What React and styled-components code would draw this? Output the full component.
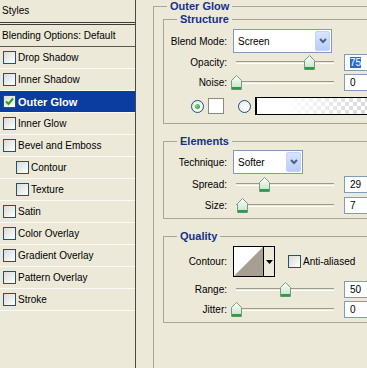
import React from "react";
import styled, { createGlobalStyle } from "styled-components";

const Global = createGlobalStyle`
  html, body { margin: 0; padding: 0; background: #ece9d8; }
  body { font-family: Tahoma, "Liberation Sans", "DejaVu Sans", sans-serif; font-size: 10px; color: #000; }
`;

const Window = styled.div`
  display: flex;
  width: 367px;
  height: 368px;
  overflow: hidden;
  background: #ece9d8;
`;

const Sidebar = styled.div`
  flex: none;
  width: 135px;
  border-right: 1px solid #4a4a44;
  display: flex;
  flex-direction: column;
`;

const Header = styled.div`
  height: 22px;
  line-height: 21px;
  padding-left: 2px;
  border-bottom: 3px double #3c3c38;
`;

const BlendRow = styled.div`
  height: 21px;
  line-height: 21px;
  padding-left: 2px;
  border-bottom: 1px solid #5a5a54;
`;

const StyleRow = styled.div`
  display: flex;
  align-items: center;
  gap: 2px;
  height: 21px;
  padding-left: ${(p) => (p.$indent ? 16 : 3)}px;
  border-bottom: 1px solid #fbfaf4;
  background: ${(p) => (p.$selected ? "#0b3c9f" : "transparent")};
  color: ${(p) => (p.$selected ? "#fff" : "#000")};
  font-weight: ${(p) => (p.$selected ? "bold" : "normal")};
  font-size: ${(p) => (p.$selected ? 11 : 10)}px;
`;

const Box = styled.span`
  flex: none;
  width: 11px;
  height: 11px;
  border: 1px solid #1c5180;
  background: linear-gradient(135deg, #dcdcd5 0%, #f4f4f0 70%, #fff 100%);
  display: inline-flex;
  align-items: center;
  justify-content: center;
`;

const Main = styled.div`
  flex: 1;
  min-width: 0;
  padding-left: 17px;
  overflow: hidden;
`;

const OuterGroup = styled.fieldset`
  margin: 0;
  width: 250px;
  min-height: 400px;
  padding: 0 0 0 9px;
  border: 1px solid #a9a698;
  border-right: none;
  box-sizing: border-box;
`;

const Group = styled.fieldset`
  margin: ${(p) => (p.$first ? 0 : 11)}px 0 0 0;
  padding: 0 0 ${(p) => p.$pb}px 0;
  border: 1px solid #a9a698;
  border-right: none;
  min-width: 0;
`;

const Legend = styled.legend`
  font-weight: bold;
  font-size: 11px;
  color: #14308e;
  line-height: 13px;
  padding: 0 3px;
  margin-left: ${(p) => p.$ml}px;
`;

const Row = styled.div`
  display: flex;
  align-items: center;
  height: ${(p) => p.$h}px;
  margin-top: ${(p) => p.$mt}px;
`;

const Label = styled.span`
  flex: none;
  width: 63px;
  text-align: right;
  margin-right: 6px;
`;

const Select = styled.div`
  flex: none;
  width: ${(p) => p.$w}px;
  height: 22px;
  border: 1px solid #7f9db9;
  background: #fff;
  display: flex;
  align-items: center;
  justify-content: space-between;
  padding: 0 1px 0 4px;
`;

const DropBtn = styled.span`
  width: 15px;
  height: 20px;
  border: 1px solid #c3d3fd;
  box-sizing: border-box;
  border-radius: 2px;
  background: linear-gradient(180deg, #d8e4fd 0%, #b9cdf9 100%);
  display: flex;
  align-items: center;
  justify-content: center;
`;

const SliderWrap = styled.div`
  flex: none;
  position: relative;
  width: 104px;
  height: 18px;
  margin-right: 7px;
`;

const Track = styled.div`
  position: absolute;
  left: 3px;
  right: 3px;
  top: 8px;
  height: 1px;
  border-top: 1px solid #9d9a8c;
  border-bottom: 1px solid #fff;
`;

const Thumb = styled.svg`
  position: absolute;
  top: 2px;
`;

const Field = styled.div`
  flex: none;
  width: 40px;
  height: 15px;
  border: 1px solid #7f9db9;
  background: #fff;
  padding-left: 5px;
  line-height: 15px;
`;

const Sel = styled.span`
  background: #316ac5;
  color: #fff;
`;

const ColorRow = styled.div`
  display: flex;
  align-items: center;
  height: 18px;
  margin-top: 6px;
  padding-left: 27px;
`;

const Radio = styled.span`
  flex: none;
  width: 11px;
  height: 11px;
  border-radius: 50%;
  border: 1px solid #1c5180;
  background: radial-gradient(circle at 60% 60%, #fff 0%, #e6e6e0 100%);
  display: inline-flex;
  align-items: center;
  justify-content: center;
  margin-right: ${(p) => p.$mr}px;
`;

const Dot = styled.span`
  width: 5px;
  height: 5px;
  border-radius: 50%;
  background: radial-gradient(circle at 35% 35%, #7fd07f, #21a121);
`;

const Swatch = styled.span`
  flex: none;
  width: 14px;
  height: 14px;
  border: 1px solid #8a8a80;
  background: #fff;
  margin-right: 14px;
`;

const GradientBar = styled.span`
  flex: none;
  width: 110px;
  height: 16px;
  border: 1px solid #000;
  border-left-width: 2px;
  background:
    linear-gradient(90deg, #fff 0%, #fff 25%, rgba(255,255,255,0.6) 55%, rgba(255,255,255,0) 100%),
    repeating-conic-gradient(#d8d8d8 0% 25%, #fff 0% 50%) 0 0 / 8px 8px;
`;

const ContourBox = styled.div`
  flex: none;
  display: flex;
  width: 40px;
  height: 29px;
  border: 1px solid #000;
  background: #fff;
`;

const ContourArrow = styled.span`
  flex: none;
  width: 10px;
  border-left: 1px solid #000;
  background: #ece9d8;
  display: flex;
  align-items: center;
  justify-content: center;
`;

const CheckLabel = styled.span`
  display: inline-flex;
  align-items: center;
  gap: 2px;
  margin-left: 13px;
`;

const Check = () => (
  <svg width="9" height="9" viewBox="0 0 9 9">
    <path d="M1 4.5 L3.5 7 L8 1.5" fill="none" stroke="#21a121" strokeWidth="2" />
  </svg>
);

const Chevron = () => (
  <svg width="8" height="6" viewBox="0 0 8 6">
    <path d="M1 1 L4 4 L7 1" fill="none" stroke="#4d6185" strokeWidth="2" />
  </svg>
);

const Slider = ({ value }) => {
  const x = 3 + (value / 100) * 98 - 5.5;
  return (
    <SliderWrap>
      <Track />
      <Thumb width="11" height="15" viewBox="0 0 11 15" style={{ left: x }}>
        <defs>
          <linearGradient id="tg" x1="0" y1="0" x2="0" y2="1">
            <stop offset="0" stopColor="#ffffff" />
            <stop offset="1" stopColor="#bfe3c4" />
          </linearGradient>
        </defs>
        <path d="M0.5 5.5 L5.5 0.5 L10.5 5.5 L10.5 14.5 L0.5 14.5 Z" fill="url(#tg)" stroke="#7a9a80" />
        <rect x="1" y="12" width="9" height="2.5" fill="#2f9a48" />
      </Thumb>
    </SliderWrap>
  );
};

const SliderRow = ({ label, value, mt, children }) => (
  <Row $h={18} $mt={mt}>
    <Label>{label}</Label>
    <Slider value={value} />
    <Field>{children}</Field>
  </Row>
);

const items = [
  { name: "Drop Shadow" },
  { name: "Inner Shadow" },
  { name: "Outer Glow", selected: true },
  { name: "Inner Glow" },
  { name: "Bevel and Emboss" },
  { name: "Contour", indent: true },
  { name: "Texture", indent: true },
  { name: "Satin" },
  { name: "Color Overlay" },
  { name: "Gradient Overlay" },
  { name: "Pattern Overlay" },
  { name: "Stroke" },
];

export default function App() {
  return (
    <>
      <Global />
      <Window>
        <Sidebar>
          <Header>Styles</Header>
          <BlendRow>Blending Options: Default</BlendRow>
          {items.map((it) => (
            <StyleRow key={it.name} $selected={it.selected} $indent={it.indent}>
              <Box>{it.selected && <Check />}</Box>
              {it.name}
            </StyleRow>
          ))}
        </Sidebar>
        <Main>
          <OuterGroup>
            <Legend $ml={4}>Outer Glow</Legend>
            <Group $first $pb={8}>
              <Legend $ml={13}>Structure</Legend>
              <Row $h={24} $mt={3}>
                <Label>Blend Mode:</Label>
                <Select $w={92}>
                  Screen
                  <DropBtn><Chevron /></DropBtn>
                </Select>
              </Row>
              <SliderRow label="Opacity:" value={75} mt={0}><Sel>75</Sel></SliderRow>
              <SliderRow label="Noise:" value={0} mt={2}>0</SliderRow>
              <ColorRow>
                <Radio $mr={4}><Dot /></Radio>
                <Swatch />
                <Radio $mr={4} />
                <GradientBar />
              </ColorRow>
            </Group>
            <Group $pb={4}>
              <Legend $ml={13}>Elements</Legend>
              <Row $h={24} $mt={2}>
                <Label>Technique:</Label>
                <Select $w={63}>
                  Softer
                  <DropBtn><Chevron /></DropBtn>
                </Select>
              </Row>
              <SliderRow label="Spread:" value={29} mt={1}>29</SliderRow>
              <SliderRow label="Size:" value={7} mt={3}>7</SliderRow>
            </Group>
            <Group $pb={4}>
              <Legend $ml={13}>Quality</Legend>
              <Row $h={31} $mt={3}>
                <Label>Contour:</Label>
                <ContourBox>
                  <svg width="29" height="29" viewBox="0 0 29 29">
                    <path d="M0 29 L29 0 L29 29 Z" fill="#a69f92" />
                  </svg>
                  <ContourArrow>
                    <svg width="7" height="4" viewBox="0 0 7 4"><path d="M0 0 L7 0 L3.5 4 Z" fill="#000" /></svg>
                  </ContourArrow>
                </ContourBox>
                <CheckLabel>
                  <Box />
                  Anti-aliased
                </CheckLabel>
              </Row>
              <SliderRow label="Range:" value={50} mt={3}>50</SliderRow>
              <SliderRow label="Jitter:" value={0} mt={2}>0</SliderRow>
            </Group>
          </OuterGroup>
        </Main>
      </Window>
    </>
  );
}
